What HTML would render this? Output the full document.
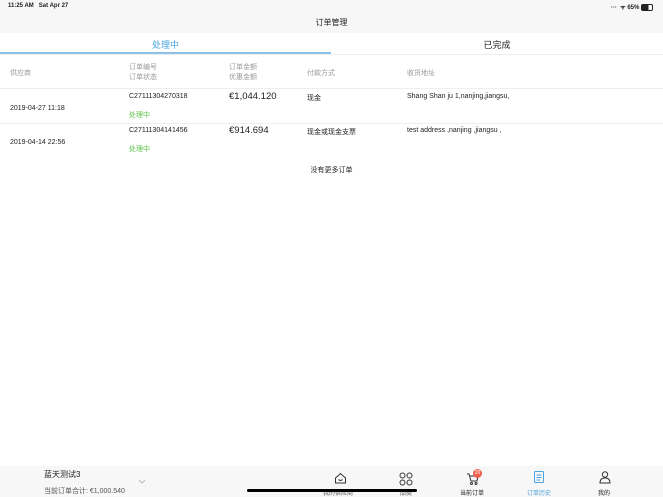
<html><head><style>
body{margin:0;width:663px;height:497px;background:#fff;font-family:"Liberation Sans","Noto Sans CJK SC",sans-serif;position:relative;overflow:hidden;color:#222}
.a{position:absolute;white-space:nowrap}
.g{color:#999;font-size:7px}
.s{font-size:7px;color:#222}
svg{position:absolute;fill:none;stroke:#333;stroke-width:1}
</style></head><body>
<div class="a" style="left:0;top:0;width:663px;height:33px;background:#f7f7f7"></div>
<div class="a" style="left:8px;top:3px;font-size:6px;font-weight:bold">11:25 AM&nbsp;&nbsp; Sat Apr 27</div>
<div class="a" style="right:10px;top:3px;font-size:6px;font-weight:bold">···&nbsp; ᯤ 65% <span style="display:inline-block;width:10px;height:5px;border:1px solid #222;border-radius:2px;vertical-align:middle;background:linear-gradient(90deg,#222 65%,#fff 65%)"></span></div>
<div class="a" style="left:0;width:663px;top:17px;text-align:center;font-size:8px">订单管理</div>
<div class="a" style="left:0;width:331px;top:38px;text-align:center;font-size:9px;color:#4aa3e0">处理中</div>
<div class="a" style="left:331px;width:332px;top:38px;text-align:center;font-size:9px">已完成</div>
<div class="a" style="left:0;top:52px;width:331px;height:2px;background:#8cc2ea"></div>
<div class="a" style="left:0;top:54px;width:663px;height:1px;background:#eee"></div>
<div class="a g" style="left:10px;top:68px">供应商</div>
<div class="a g" style="left:129px;top:63px;line-height:10px">订单编号<br>订单状态</div>
<div class="a g" style="left:229px;top:63px;line-height:10px">订单金额<br>优惠金额</div>
<div class="a g" style="left:307px;top:68px">付款方式</div>
<div class="a g" style="left:407px;top:68px">收货地址</div>
<div class="a" style="left:0;top:88px;width:663px;height:1px;background:#eee"></div>
<div class="a s" style="left:10px;top:105px">2019-04-27 11:18</div>
<div class="a s" style="left:129px;top:93px">C27111304270318</div>
<div class="a" style="left:229px;top:91px;font-size:9.5px">€1,044.120</div>
<div class="a s" style="left:307px;top:93px">现金</div>
<div class="a s" style="left:407px;top:93px">Shang Shan ju 1,nanjing,jiangsu,</div>
<div class="a" style="left:129px;top:110px;font-size:7px;color:#5fc34a">处理中</div>
<div class="a" style="left:0;top:123px;width:663px;height:1px;background:#eee"></div>
<div class="a s" style="left:10px;top:139px">2019-04-14 22:56</div>
<div class="a s" style="left:129px;top:127px">C27111304141456</div>
<div class="a" style="left:229px;top:125px;font-size:9.5px">€914.694</div>
<div class="a s" style="left:307px;top:127px">现金或现金支票</div>
<div class="a s" style="left:407px;top:127px">test address ,nanjing ,jiangsu ,</div>
<div class="a" style="left:129px;top:144px;font-size:7px;color:#5fc34a">处理中</div>
<div class="a s" style="left:0;width:663px;text-align:center;top:165px">没有更多订单</div>
<div class="a" style="left:0;top:466px;width:663px;height:31px;background:#f7f7f7"></div>
<div class="a" style="left:44px;top:469px;font-size:8px">蓝天测试3</div>
<div class="a" style="left:44px;top:486px;font-size:7px;color:#555">当前订单合计: €1,000.540</div>
<svg style="left:138px;top:479px" width="8" height="5"><path d="M1 1L4 4L7 1" stroke="#bbb"/></svg>
<svg style="left:334px;top:472px" width="13" height="12"><path d="M1.5 6L6.5 1.5L11.5 6V11H1.5Z M4.5 7.5Q6.5 9.5 8.5 7.5"/></svg>
<svg style="left:399px;top:472px" width="14" height="14"><circle cx="3.5" cy="3.5" r="2.5"/><circle cx="10.5" cy="3.5" r="2.5"/><circle cx="3.5" cy="10.5" r="2.5"/><circle cx="10.5" cy="10.5" r="2.5"/></svg>
<svg style="left:466px;top:473px" width="13" height="12"><path d="M1 1H3L5 8H11L12 3H4"/><circle cx="5.5" cy="10.5" r="1"/><circle cx="10" cy="10.5" r="1"/></svg>
<div class="a" style="left:473px;top:469px;width:9px;height:9px;border-radius:5px;background:#f0604e;color:#fff;font-size:5px;text-align:center;line-height:9px">20</div>
<svg style="left:534px;top:471px" width="10" height="13"><rect x="0.5" y="0.5" width="9" height="11" rx="1" stroke="#4aa3e0"/><path d="M2.5 4H7.5M2.5 6.5H7.5M2.5 9H6" stroke="#4aa3e0"/></svg>
<svg style="left:599px;top:471px" width="12" height="13"><circle cx="6" cy="3.5" r="2.7"/><path d="M1 12Q1 7 6 7Q11 7 11 12Z"/></svg>
<div class="a" style="left:323px;top:488px;font-size:6px;color:#555">我的供应商</div>
<div class="a" style="left:400px;top:488px;font-size:6px;color:#555">品类</div>
<div class="a" style="left:460px;top:488px;font-size:6px">当前订单</div>
<div class="a" style="left:527px;top:488px;font-size:6px;color:#4aa3e0">订单历史</div>
<div class="a" style="left:598px;top:488px;font-size:6px">我的</div>
<div class="a" style="left:247px;top:489px;width:170px;height:3px;border-radius:2px;background:#000"></div>
</body></html>
